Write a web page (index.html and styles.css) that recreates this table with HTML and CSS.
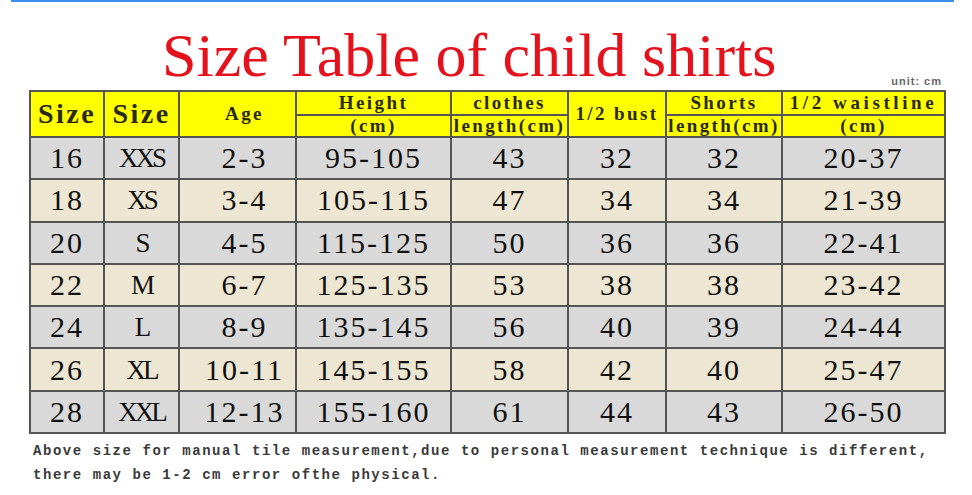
FILE: index.html
```html
<!DOCTYPE html>
<html>
<head>
<meta charset="utf-8">
<link rel="stylesheet" href="styles.css">
</head>
<body>
<div class="topbar"></div>
<div class="head">
  <h1 class="title">Size Table of child shirts</h1>
  <div class="unit">unit: cm</div>
</div>
<table class="size-table">
  <colgroup>
    <col class="c1"><col class="c2"><col class="c3"><col class="c4"><col class="c5"><col class="c6"><col class="c7"><col class="c8">
  </colgroup>
  <thead>
    <tr class="h1">
      <th rowspan="2" class="big">Size</th>
      <th rowspan="2" class="big">Size</th>
      <th rowspan="2" class="age">Age</th>
      <th>Height</th>
      <th>clothes</th>
      <th rowspan="2">1/2 bust</th>
      <th>Shorts</th>
      <th class="wide">1/2 waistline</th>
    </tr>
    <tr class="h2">
      <th>(cm)</th>
      <th>length(cm)</th>
      <th>length(cm)</th>
      <th>(cm)</th>
    </tr>
  </thead>
  <tbody>
    <tr class="grey"><td>16</td><td class="sz">XXS</td><td class="age">2-3</td><td>95-105</td><td>43</td><td>32</td><td>32</td><td>20-37</td></tr>
    <tr class="beige"><td>18</td><td class="sz">XS</td><td class="age">3-4</td><td>105-115</td><td>47</td><td>34</td><td>34</td><td>21-39</td></tr>
    <tr class="grey"><td>20</td><td class="sz">S</td><td class="age">4-5</td><td>115-125</td><td>50</td><td>36</td><td>36</td><td>22-41</td></tr>
    <tr class="beige"><td>22</td><td class="sz">M</td><td class="age">6-7</td><td>125-135</td><td>53</td><td>38</td><td>38</td><td>23-42</td></tr>
    <tr class="grey"><td>24</td><td class="sz">L</td><td class="age">8-9</td><td>135-145</td><td>56</td><td>40</td><td>39</td><td>24-44</td></tr>
    <tr class="beige"><td>26</td><td class="sz">XL</td><td class="age">10-11</td><td>145-155</td><td>58</td><td>42</td><td>40</td><td>25-47</td></tr>
    <tr class="grey"><td>28</td><td class="sz">XXL</td><td class="age">12-13</td><td>155-160</td><td>61</td><td>44</td><td>43</td><td>26-50</td></tr>
  </tbody>
</table>
<div class="note">
  <p>Above size for manual tile measurement,due to personal measurement technique is different,</p>
  <p>there may be 1-2 cm error ofthe physical.</p>
</div>
</body>
</html>
```

FILE: styles.css
```css
html, body {
  margin: 0;
  padding: 0;
  background: #ffffff;
}

.topbar {
  height: 2px;
  margin: 0 18px 0 11px;
  background: #3a8cee;
}

.head {
  width: 915px;
  margin: 22px 0 0 29px;
  height: 66px;
  display: flex;
  justify-content: space-between;
  align-items: flex-end;
}

.title {
  align-self: flex-start;
  margin: 0;
  padding-left: 133px;
  font-family: "Liberation Serif", "Times New Roman", serif;
  font-weight: normal;
  font-size: 62px;
  line-height: 62px;
  color: #e3121c;
  white-space: nowrap;
}

.unit {
  font-family: "Liberation Sans", Arial, sans-serif;
  font-weight: bold;
  font-size: 11px;
  line-height: 12px;
  color: #666;
  margin: 0 2px 3px 0;
  letter-spacing: 1px;
}

.size-table {
  margin-left: 29px;
  width: 915px;
  table-layout: fixed;
  border-collapse: collapse;
  border: 2px solid #555;
}

.c1 { width: 74px; }
.c2 { width: 75px; }
.c3 { width: 117px; }
.c4 { width: 155px; }
.c5 { width: 117px; }
.c6 { width: 98px; }
.c7 { width: 116px; }
.c8 { width: 163px; }

.size-table th,
.size-table td {
  border: 2px solid #555;
  padding: 0;
  text-align: center;
  vertical-align: middle;
  white-space: nowrap;
  overflow: hidden;
}

.size-table th {
  background: #ffff00;
  font-family: "Liberation Serif", "Times New Roman", serif;
  font-weight: bold;
  font-size: 19px;
  line-height: 20px;
  letter-spacing: 2.4px;
  color: #2a2a14;
}

.size-table th.big {
  font-size: 28px;
  letter-spacing: 2.5px;
}

.size-table th.wide {
  letter-spacing: 3.6px;
}

.size-table th.age {
  padding-left: 14px;
}

.h1 { height: 24px; }
.h2 { height: 22px; }

.size-table td {
  font-family: "Liberation Serif", "Times New Roman", serif;
  font-size: 30px;
  line-height: 30px;
  letter-spacing: 2px;
  color: #111;
}

.size-table td.sz {
  font-size: 27px;
  letter-spacing: -3px;
}

.size-table td.age {
  padding-left: 14px;
}

.size-table tbody tr { height: 42.3px; }

.grey td { background: #d9d9d9; }
.beige td { background: #ece6d2; }

.note {
  margin: 5px 0 0 33px;
  font-family: "Liberation Mono", "Courier New", monospace;
  font-weight: bold;
  font-size: 14px;
  line-height: 24px;
  letter-spacing: 1.55px;
  color: #3a3a3a;
}

.note p {
  margin: 0;
  white-space: nowrap;
}
```
